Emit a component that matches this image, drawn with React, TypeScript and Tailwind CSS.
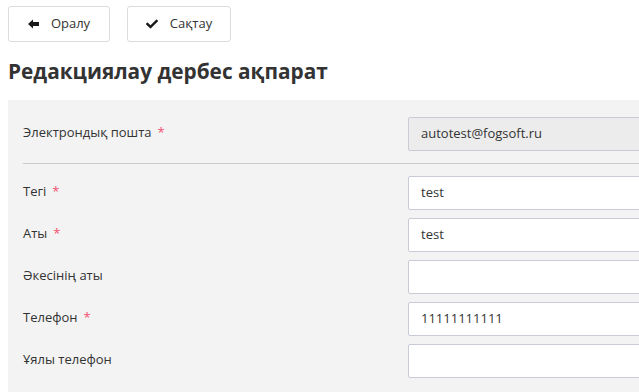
import { FaCheck } from "react-icons/fa";

type Field = { label: string; value: string; required?: boolean };

const FIELDS: Field[] = [
  { label: "Тегі", value: "test", required: true },
  { label: "Аты", value: "test", required: true },
  { label: "Әкесінің аты", value: "" },
  { label: "Телефон", value: "11111111111", required: true },
  { label: "Ұялы телефон", value: "" },
];

function Label({ text, required }: { text: string; required?: boolean }) {
  return (
    <div className="w-[385px] shrink-0 pt-[5px] text-[13px] leading-[20px] text-[#333]">
      {text}
      {required && <span className="ml-[6px] text-[#f0506e]">*</span>}
    </div>
  );
}

// old font-awesome style block arrow
function BackArrow() {
  return (
    <svg width="11" height="10" viewBox="0 0 11 10" className="text-[#1a1a1a]">
      <path d="M0 5 L5 0.5 L5 3 L11 3 L11 7 L5 7 L5 9.5 Z" fill="currentColor" />
    </svg>
  );
}

export default function App() {
  return (
    <div className="w-[639px] h-[392px] overflow-hidden bg-white text-[#333]" style={{ fontFamily: "'Open Sans', 'Noto Sans', sans-serif" }}>
      <div className="flex gap-[17px] px-2 pt-[6px]">
        <button className="flex h-9 w-[102px] items-center justify-center gap-[12px] rounded-[3px] border border-[#dcdcdc] bg-white text-[13px] text-[#333]">
          <BackArrow />
          Оралу
        </button>
        <button className="flex h-9 w-[104px] items-center justify-center gap-[12px] rounded-[3px] border border-[#dcdcdc] bg-white text-[13px] text-[#333]">
          <FaCheck className="h-[12px] w-[12px] text-[#1a1a1a]" />
          Сақтау
        </button>
      </div>

      <h1 className="px-2 pt-[15px] text-[20.8px] font-bold leading-[28px] text-[#333]">
        Редакциялау дербес ақпарат
      </h1>

      <div className="ml-2 mt-[15px] w-[800px] bg-[#f3f3f3] pl-[15px] pt-[17px] pb-4">
        <div className="flex">
          <Label text="Электрондық пошта" required />
          <div className="flex h-[34px] w-[380px] items-center rounded-[2px] border border-[#c8cbd6] bg-[#ececec] px-3 text-[13px] text-[#333]">
            autotest@fogsoft.ru
          </div>
        </div>

        <div className="my-[12px] border-t border-[#cccccc]" />

        <div className="flex flex-col gap-2">
          {FIELDS.map((f) => (
            <div key={f.label} className="flex">
              <Label text={f.label} required={f.required} />
              <div className="flex h-[34px] w-[380px] items-center rounded-[2px] border border-[#c8cbd6] bg-white px-3 text-[13px] text-[#333]">
                {f.value}
              </div>
            </div>
          ))}
        </div>
      </div>
    </div>
  );
}
